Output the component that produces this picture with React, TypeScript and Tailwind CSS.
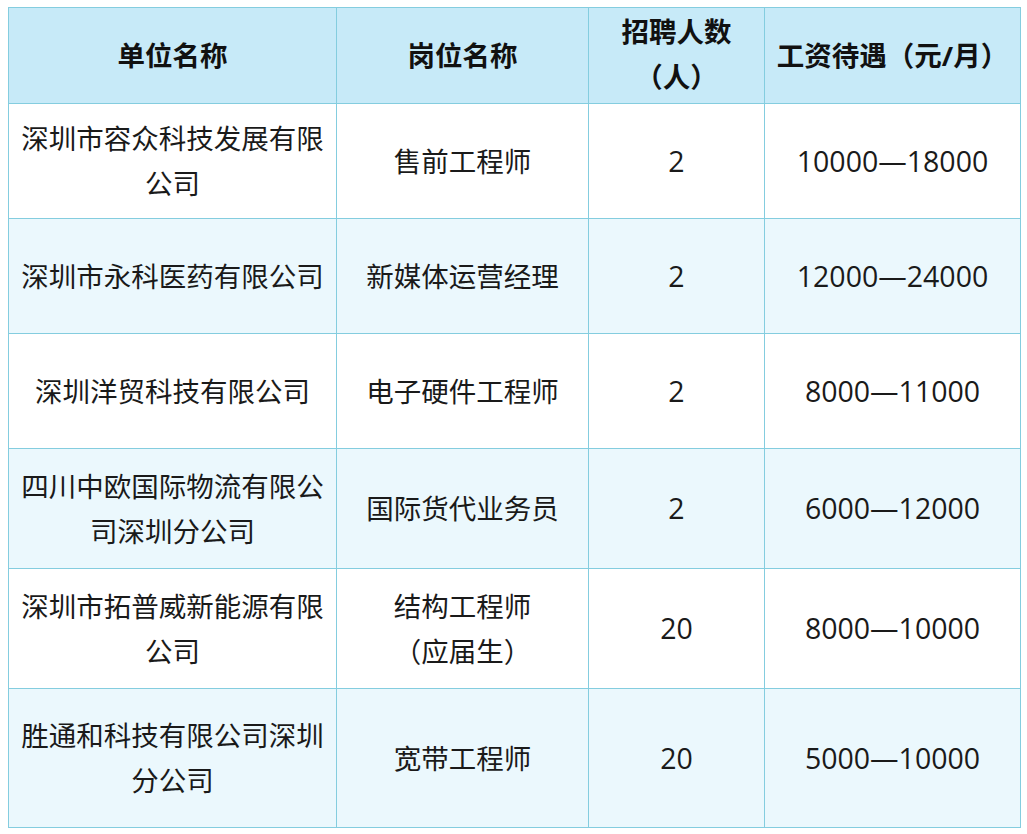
const rows: { company: string[]; job: string[]; count: string; pay: string }[] = [
  { company: ["深圳市容众科技发展有限", "公司"], job: ["售前工程师"], count: "2", pay: "10000—18000" },
  { company: ["深圳市永科医药有限公司"], job: ["新媒体运营经理"], count: "2", pay: "12000—24000" },
  { company: ["深圳洋贸科技有限公司"], job: ["电子硬件工程师"], count: "2", pay: "8000—11000" },
  { company: ["四川中欧国际物流有限公", "司深圳分公司"], job: ["国际货代业务员"], count: "2", pay: "6000—12000" },
  { company: ["深圳市拓普威新能源有限", "公司"], job: ["结构工程师", "（应届生）"], count: "20", pay: "8000—10000" },
  { company: ["胜通和科技有限公司深圳", "分公司"], job: ["宽带工程师"], count: "20", pay: "5000—10000" },
];

const heights = ["h-[115px]", "h-[115px]", "h-[115px]", "h-[120px]", "h-[120px]", "h-[139px]"];

function Lines({ lines }: { lines: string[] }) {
  return (
    <>
      {lines.map((l, i) => (
        <div key={i} className="whitespace-nowrap">
          {l}
        </div>
      ))}
    </>
  );
}

export default function App() {
  return (
    <div
      className="min-h-[834px] w-[1027px] bg-white pl-[8px] pt-[7px] text-[#1a1a1a]"
      style={{ fontFamily: '"Open Sans", "Noto Sans CJK SC", sans-serif' }}
    >
      <table className="w-[1012px] table-fixed border-collapse text-center text-[27.5px] leading-[45px]">
        <colgroup>
          <col className="w-[328px]" />
          <col className="w-[252px]" />
          <col className="w-[176px]" />
          <col className="w-[256px]" />
        </colgroup>
        <thead>
          <tr className="h-[96px] bg-[#c7eaf8] font-bold text-[#111]">
            <th className="border border-[#84cddf] font-bold">单位名称</th>
            <th className="border border-[#84cddf] font-bold">岗位名称</th>
            <th className="border border-[#84cddf] pb-[4px] font-bold">
              <div>招聘人数</div>
              <div>（人）</div>
            </th>
            <th className="whitespace-nowrap border border-[#84cddf] font-bold">工资待遇（元/月）</th>
          </tr>
        </thead>
        <tbody>
          {rows.map((r, i) => (
            <tr key={i} className={`${heights[i]} ${i % 2 === 1 ? "bg-[#ebf8fd]" : "bg-white"}`}>
              <td className="border border-[#84cddf] px-2">
                <Lines lines={r.company} />
              </td>
              <td className="border border-[#84cddf] px-2">
                <Lines lines={r.job} />
              </td>
              <td className="border border-[#84cddf] text-[28.5px]">{r.count}</td>
              <td className="border border-[#84cddf] text-[28.5px]">{r.pay}</td>
            </tr>
          ))}
        </tbody>
      </table>
    </div>
  );
}
